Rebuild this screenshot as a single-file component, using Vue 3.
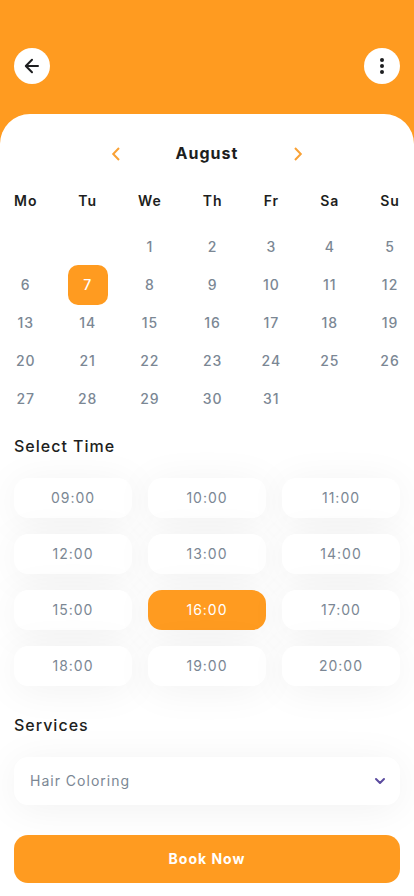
<script setup>
import { ref } from 'vue'

const weekdays = ['Mo', 'Tu', 'We', 'Th', 'Fr', 'Sa', 'Su']
const leadingBlanks = 2
const daysInMonth = 31

const weeks = []
for (let start = 1 - leadingBlanks; start <= daysInMonth; start += 7) {
  weeks.push(
    Array.from({ length: 7 }, (_, i) => {
      const day = start + i
      return day > 0 && day <= daysInMonth ? day : null
    })
  )
}

const times = Array.from({ length: 12 }, (_, i) => `${String(i + 9).padStart(2, '0')}:00`)

const selectedDay = ref(7)
const selectedTime = ref('16:00')
const service = ref('Hair Coloring')
</script>

<template>
  <div class="page">
    <header class="topbar">
      <button class="round" type="button" aria-label="Back">
        <svg width="24" height="24" viewBox="0 0 24 24" fill="none" stroke="currentColor" stroke-width="2" stroke-linecap="round" stroke-linejoin="round">
          <path d="M18 12H6M12 5.8 5.8 12l6.2 6.2" />
        </svg>
      </button>
      <button class="round" type="button" aria-label="More options">
        <svg width="24" height="24" viewBox="0 0 24 24" fill="currentColor">
          <circle cx="12" cy="6" r="2" />
          <circle cx="12" cy="12" r="2" />
          <circle cx="12" cy="18" r="2" />
        </svg>
      </button>
    </header>

    <main class="sheet">
      <div class="month">
        <button class="step" type="button" aria-label="Previous month">
          <svg width="24" height="24" viewBox="0 0 24 24" fill="none" stroke="currentColor" stroke-width="2">
            <path d="M15 7 9.2 13 15 19" />
          </svg>
        </button>
        <h1 class="month-name">August</h1>
        <button class="step" type="button" aria-label="Next month">
          <svg width="24" height="24" viewBox="0 0 24 24" fill="none" stroke="currentColor" stroke-width="2">
            <path d="m9 7 5.8 6L9 19" />
          </svg>
        </button>
      </div>

      <table class="calendar">
        <thead>
          <tr>
            <th v-for="name in weekdays" :key="name" class="weekday" scope="col">{{ name }}</th>
          </tr>
        </thead>
        <tbody>
          <tr v-for="(week, w) in weeks" :key="w">
            <td v-for="(day, d) in week" :key="d" class="cell">
              <button
                v-if="day"
                class="day"
                :class="{ active: day === selectedDay }"
                type="button"
                @click="selectedDay = day"
              >{{ day }}</button>
            </td>
          </tr>
        </tbody>
      </table>

      <h2 class="heading">Select Time</h2>
      <div class="times">
        <button
          v-for="time in times"
          :key="time"
          class="time"
          :class="{ active: time === selectedTime }"
          type="button"
          @click="selectedTime = time"
        >{{ time }}</button>
      </div>

      <label class="heading" for="service">Services</label>
      <div class="picker">
        <select id="service" v-model="service" class="select">
          <option>Hair Coloring</option>
        </select>
        <svg class="caret" width="24" height="24" viewBox="0 0 24 24" fill="none" stroke="currentColor" stroke-width="2" stroke-linecap="round" stroke-linejoin="round">
          <path d="m8 10 4 4 4-4" />
        </svg>
      </div>

      <button class="book" type="button">Book Now</button>
    </main>
  </div>
</template>

<style>
body {
  background: #ff9b20;
}
</style>

<style scoped>
.page {
  display: flex;
  flex-direction: column;
  min-height: 100vh;
  font-family: Inter, "Liberation Sans", sans-serif;
  letter-spacing: 1px;
  color: #1d1e20;
  background: #ff9b20;
}

button,
select {
  margin: 0;
  padding: 0;
  border: 0;
  font: inherit;
  letter-spacing: inherit;
  color: inherit;
  background: none;
  cursor: pointer;
}

svg {
  display: block;
}

.topbar {
  display: flex;
  justify-content: space-between;
  padding: 48px 14px 30px;
}

.round {
  display: grid;
  place-items: center;
  width: 36px;
  height: 36px;
  border-radius: 50%;
  background: #fff;
}

.sheet {
  display: flex;
  flex: 1;
  flex-direction: column;
  padding: 24px 14px 13px;
  border-radius: 30px 30px 0 0;
  background: #fff;
  overflow: hidden;
}

.month {
  display: flex;
  align-items: center;
  justify-content: center;
  gap: 48px;
  height: 30px;
}

.month-name {
  margin: 0;
  font-size: 16px;
  line-height: 24px;
  font-weight: 700;
}

.step {
  color: #f9a135;
}

.calendar {
  display: grid;
  grid-template-columns: repeat(7, auto);
  justify-content: space-between;
  margin-top: 21px;
  font-size: 14px;
  line-height: 24px;
}

.calendar thead,
.calendar tbody,
.calendar tr {
  display: contents;
}

.weekday {
  padding: 0 0 15px;
  font-weight: 600;
  text-align: center;
}

.cell {
  display: flex;
  align-items: center;
  justify-content: center;
  height: 38px;
  padding: 0;
}

.day {
  flex: none;
  width: 40px;
  height: 40px;
  margin: 0 -12px;
  border-radius: 10px;
  font-weight: 500;
  color: #7b8794;
}

.heading {
  margin: 16px 0 0;
  font-size: 16px;
  line-height: 24px;
  font-weight: 500;
}

.times {
  display: grid;
  grid-template-columns: repeat(3, 1fr);
  gap: 16px;
  margin: 20px 0 11px;
}

.time {
  height: 40px;
  padding-bottom: 2px;
  border-radius: 14px;
  font-size: 14px;
  color: #7b8794;
  background: #fff;
  box-shadow: 0 4px 40px rgba(0, 0, 0, 0.06);
}

.day.active,
.time.active {
  color: #fff;
  background: #ff9b20;
}

.picker {
  position: relative;
  margin: 20px 0 30px;
}

.select {
  display: block;
  width: 100%;
  height: 48px;
  padding: 0 44px 2px 16px;
  border-radius: 14px;
  font-size: 14px;
  color: #7b8794;
  background: #fff;
  box-shadow: 0 4px 40px rgba(0, 0, 0, 0.06);
  appearance: none;
}

.caret {
  position: absolute;
  top: 12px;
  right: 8px;
  color: #5b4b9f;
  pointer-events: none;
}

.book {
  position: relative;
  height: 48px;
  padding-bottom: 2px;
  border-radius: 14px;
  font-size: 14px;
  font-weight: 700;
  color: #fff;
  background: #ff9b20;
}
</style>
